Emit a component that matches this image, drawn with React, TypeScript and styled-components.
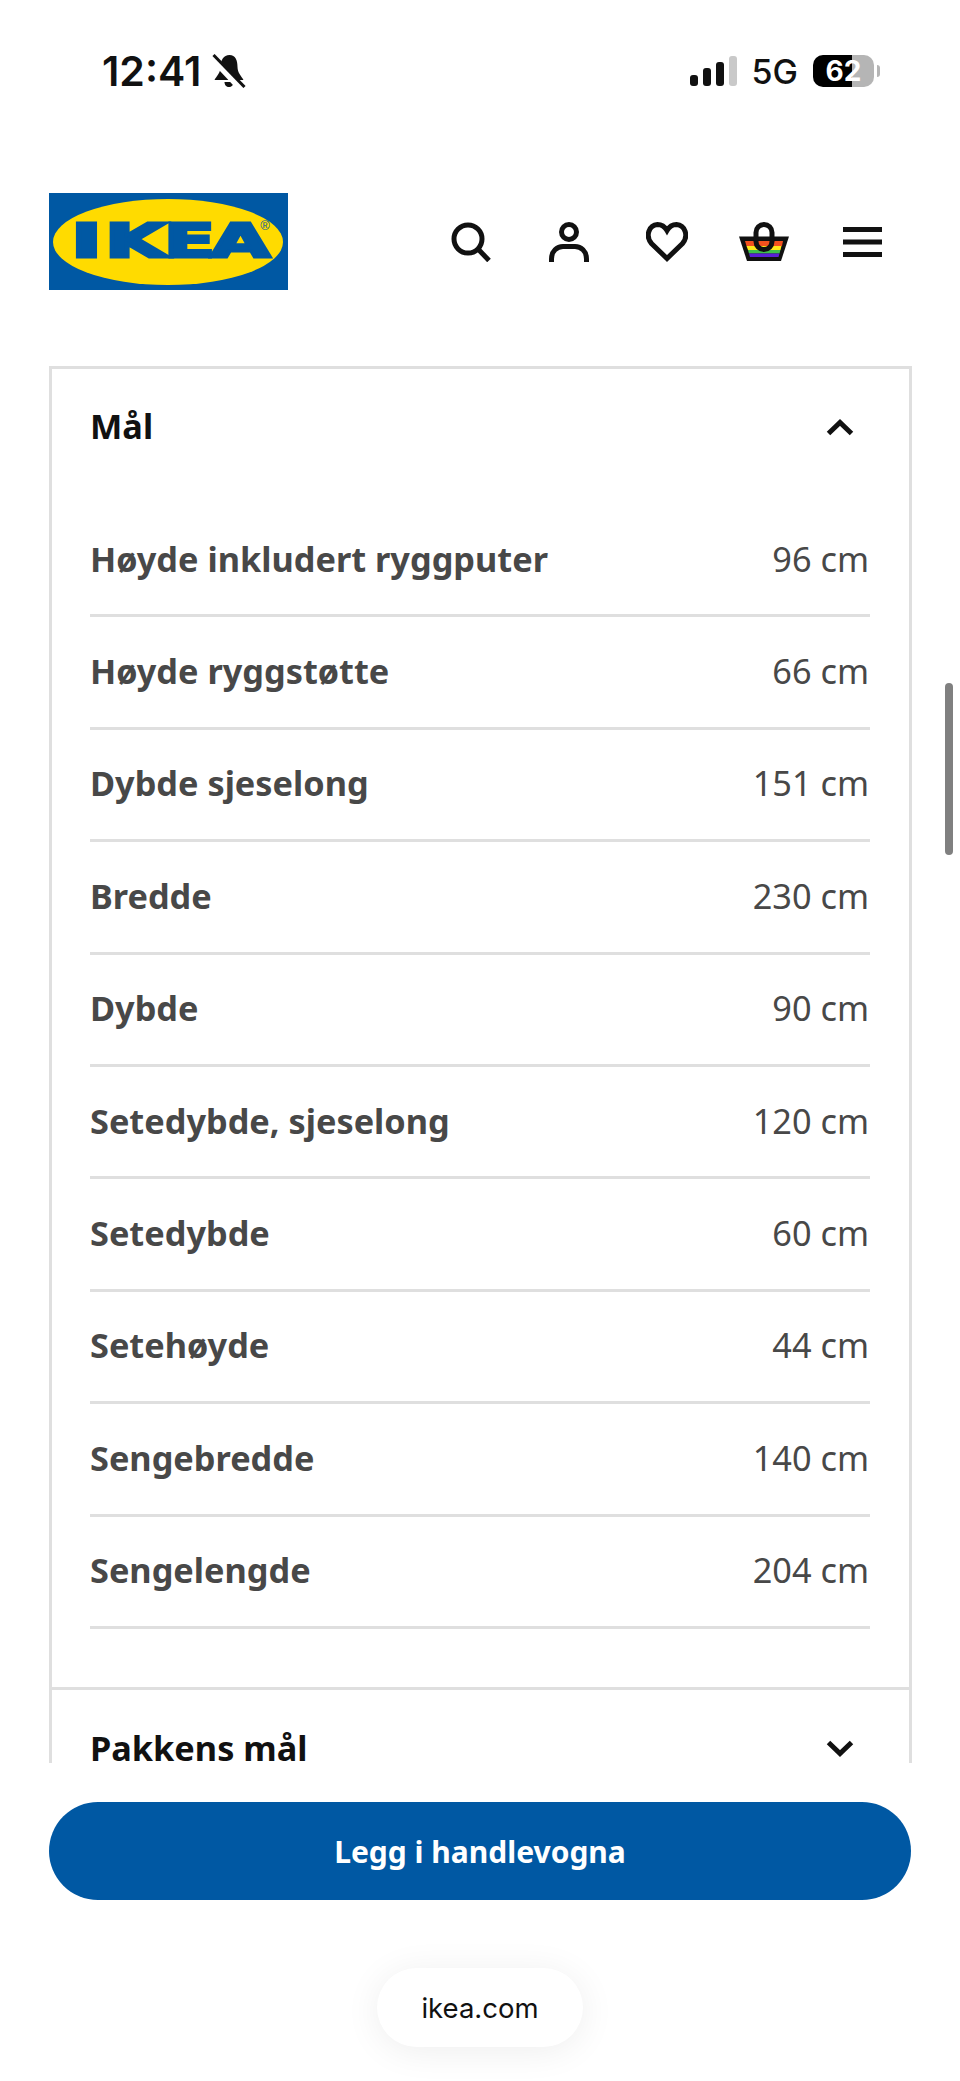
import React from "react";
import styled, { createGlobalStyle } from "styled-components";

const Global = createGlobalStyle`
  html, body { margin: 0; padding: 0; background: #fff; }
  * { box-sizing: border-box; }
`;

const Page = styled.div`
  position: relative;
  width: 960px;
  height: 2081px;
  overflow: hidden;
  background: #fff;
  font-family: "Noto Sans", sans-serif;
  display: flex;
  flex-direction: column;
`;

const StatusBar = styled.div`
  height: 193px;
  flex: none;
  padding: 50px 80px 0 102px;
  display: flex;
  align-items: flex-start;
  justify-content: space-between;
`;

const StatusLeft = styled.div`
  display: flex;
  align-items: center;
  gap: 11px;
  height: 42px;
`;

const Clock = styled.span`
  font-family: Inter, sans-serif;
  font-weight: 600;
  font-size: 41px;
  line-height: 42px;
  color: #111;
`;

const StatusRight = styled.div`
  display: flex;
  align-items: center;
  height: 42px;
`;

const Network = styled.span`
  font-family: Inter, sans-serif;
  font-weight: 500;
  font-size: 34px;
  color: #111;
  margin: 0 15px 0 15px;
`;

const Battery = styled.div`
  width: 61px;
  height: 32px;
  border-radius: 10px;
  overflow: hidden;
  background: linear-gradient(to right, #000 0 64%, #b5b5b5 64% 100%);
  color: #fff;
  font-family: Inter, sans-serif;
  font-weight: 700;
  font-size: 28px;
  line-height: 32px;
  text-align: center;
`;

const BatteryCap = styled.div`
  width: 3px;
  height: 12px;
  margin-left: 3px;
  border-radius: 0 3px 3px 0;
  background: #b5b5b5;
`;

const Header = styled.header`
  flex: none;
  height: 173px;
  padding: 0 72px 0 49px;
  display: flex;
  align-items: flex-start;
  justify-content: space-between;
`;

const IconRow = styled.nav`
  display: flex;
  align-items: center;
  width: 443px;
  height: 97px;
  justify-content: space-between;
`;

const IconSlot = styled.span`
  display: flex;
  width: 52px;
  height: 52px;
  align-items: center;
  justify-content: center;
`;

const Main = styled.main`
  flex: none;
  height: 1397px;
  padding: 0 48px 0 49px;
  overflow: hidden;
`;

const Card = styled.section`
  border: 3px solid #dfdfdf;
`;

const Group = styled.div<{ $divider?: boolean }>`
  border-top: ${(p) => (p.$divider ? "3px solid #dfdfdf" : "none")};
  padding: 0 39px 0 38px;
`;

const GroupHead = styled.div<{ $tall?: boolean }>`
  display: flex;
  align-items: center;
  justify-content: space-between;
  height: ${(p) => (p.$tall ? "114px" : "117px")};
`;

const GroupTitle = styled.h2`
  margin: 0;
  font-size: 34.3px;
  font-weight: 700;
  line-height: 48px;
  color: #111;
`;

const Chevron = styled.svg`
  display: block;
  margin: 2px 15px 0 0;
`;

const Rows = styled.dl`
  margin: 0;
  padding: 22px 0 58px;
`;

const Row = styled.div`
  display: flex;
  align-items: center;
  justify-content: space-between;
  height: 112.4px;
  padding-bottom: 3px;
  border-bottom: 3px solid #dfdfdf;
`;

const Term = styled.dt`
  font-size: 34.3px;
  font-weight: 700;
  color: #484848;
`;

const Value = styled.dd`
  margin: 0 1px 0 0;
  font-size: 34.3px;
  color: #484848;
`;

const BuyBar = styled.div`
  flex: none;
  padding: 39px 49px 0;
`;

const BuyButton = styled.button`
  width: 862px;
  height: 98px;
  border: 0;
  border-radius: 49px;
  background: #0058a3;
  color: #fff;
  font-family: "Noto Sans", sans-serif;
  font-size: 30px;
  font-weight: 700;
`;

const UrlPill = styled.div`
  position: absolute;
  left: 377px;
  top: 1968px;
  width: 206px;
  height: 79px;
  border-radius: 40px;
  background: #fff;
  box-shadow: 0 4px 36px rgba(0, 0, 0, 0.07);
  display: flex;
  align-items: center;
  justify-content: center;
  font-family: Inter, sans-serif;
  font-size: 27.5px;
  color: #111;
`;

const ScrollThumb = styled.div`
  position: absolute;
  left: 945px;
  top: 683px;
  width: 8px;
  height: 172px;
  border-radius: 4px;
  background: #808080;
`;

const rows: [string, string][] = [
  ["Høyde inkludert ryggputer", "96 cm"],
  ["Høyde ryggstøtte", "66 cm"],
  ["Dybde sjeselong", "151 cm"],
  ["Bredde", "230 cm"],
  ["Dybde", "90 cm"],
  ["Setedybde, sjeselong", "120 cm"],
  ["Setedybde", "60 cm"],
  ["Setehøyde", "44 cm"],
  ["Sengebredde", "140 cm"],
  ["Sengelengde", "204 cm"],
];

const ChevronIcon = ({ up }: { up?: boolean }) => (
  <Chevron width="30" height="20" viewBox="0 0 30 20">
    <path d={up ? "M3.5 16.5 L15 5.5 L26.5 16.5" : "M3.5 3.5 L15 14.5 L26.5 3.5"} fill="none" stroke="#111" strokeWidth="5" />
  </Chevron>
);

const logoLetters: [string, number, number][] = [
  ["I", 22, 31],
  ["K", 56, 61],
  ["E", 115, 51],
  ["A", 162, 59],
];

const Logo = () => (
  <svg width="239" height="97" viewBox="0 0 239 97">
    <rect width="239" height="97" fill="#0058a3" />
    <ellipse cx="119" cy="49" rx="115" ry="43" fill="#ffdb00" />
    {logoLetters.map(([letter, x, w]) => (
      <text
        key={letter}
        x={x}
        y="64"
        fontFamily="'DejaVu Sans', sans-serif"
        fontWeight="700"
        fontSize="46"
        textLength={w}
        lengthAdjust="spacingAndGlyphs"
        fill="#0058a3"
        stroke="#0058a3"
        strokeWidth="3"
      >
        {letter}
      </text>
    ))}
    <text x="216" y="37" fontFamily="'Liberation Sans', sans-serif" fontSize="13" textAnchor="middle" fill="#0058a3">®</text>
  </svg>
);

const Search = () => (
  <svg width="40" height="40" viewBox="0 0 40 40" fill="none" stroke="#111" strokeWidth="5">
    <circle cx="17" cy="17" r="14" />
    <path d="M27 27 L38 38.5" />
  </svg>
);

const Person = () => (
  <svg width="40" height="40" viewBox="0 0 40 40" fill="none" stroke="#111" strokeWidth="5">
    <circle cx="20" cy="10" r="7.5" />
    <path d="M2.5 40 V37 C2.5 29 8 24.5 14 24.5 H26 C32 24.5 37.5 29 37.5 37 V40" />
  </svg>
);

const Heart = () => (
  <svg width="42" height="40" viewBox="0 0 42 40" fill="none" stroke="#111" strokeWidth="5">
    <path d="M21 36.5 L5.5 21.5 C-1 14 3 3 11.5 2.5 C16 2.5 19 5 21 8.5 C23 5 26 2.5 30.5 2.5 C39 3 43 14 36.5 21.5 Z" />
  </svg>
);

const Basket = () => (
  <svg width="50" height="40" viewBox="0 0 50 40">
    <path d="M0 14.5 H50 L42 39 H8 Z" fill="#111" />
    <path d="M6 19 H44 L43 24 H7.5 Z" fill="#f4511e" />
    <path d="M7.5 24 H42.5 L41.5 28 H9 Z" fill="#ffe91a" />
    <path d="M9 28 H41.5 L40.5 31.5 H10 Z" fill="#3ec24a" />
    <path d="M10 31.5 H40.5 L39.5 35 H11 Z" fill="#5a1fd6" />
    <rect x="17" y="2.5" width="16" height="25" rx="8" fill="none" stroke="#111" strokeWidth="5" />
  </svg>
);

const Menu = () => (
  <svg width="39" height="30" viewBox="0 0 39 30" fill="#111">
    <rect width="39" height="5" y="0" />
    <rect width="39" height="5" y="12.5" />
    <rect width="39" height="5" y="25" />
  </svg>
);

const SilentBell = () => (
  <svg width="34" height="34" viewBox="0 0 33 34">
    <path d="M17 1 C11 1 8 6 8 13 C8 19 4 22 2 26 H31 C29 22 25 19 25 13 C25 6 23 1 17 1 Z M12 28 H21 C21 31 19 33 16.5 33 C14 33 12 31 12 28 Z" fill="#111" />
    <path d="M0 4 L30 36" stroke="#fff" strokeWidth="7" />
    <path d="M1 1 L32 33" stroke="#111" strokeWidth="3" />
  </svg>
);

const Signal = () => (
  <svg width="47" height="30" viewBox="0 0 47 30">
    <rect x="0" y="19" width="8" height="11" rx="3" fill="#111" />
    <rect x="13" y="12" width="8" height="18" rx="3" fill="#111" />
    <rect x="26" y="6" width="8" height="24" rx="3" fill="#111" />
    <rect x="39" y="0" width="8" height="30" rx="3" fill="#c9c9c9" />
  </svg>
);

export default function App() {
  return (
    <Page>
      <Global />
      <StatusBar>
        <StatusLeft>
          <Clock>12:41</Clock>
          <SilentBell />
        </StatusLeft>
        <StatusRight>
          <Signal />
          <Network>5G</Network>
          <Battery>62</Battery>
          <BatteryCap />
        </StatusRight>
      </StatusBar>
      <Header>
        <Logo />
        <IconRow>
          <IconSlot><Search /></IconSlot>
          <IconSlot><Person /></IconSlot>
          <IconSlot><Heart /></IconSlot>
          <IconSlot><Basket /></IconSlot>
          <IconSlot><Menu /></IconSlot>
        </IconRow>
      </Header>
      <Main>
        <Card>
          <Group>
            <GroupHead $tall>
              <GroupTitle>Mål</GroupTitle>
              <ChevronIcon up />
            </GroupHead>
            <Rows>
              {rows.map(([term, value]) => (
                <Row key={term}>
                  <Term>{term}</Term>
                  <Value>{value}</Value>
                </Row>
              ))}
            </Rows>
          </Group>
          <Group $divider>
            <GroupHead>
              <GroupTitle>Pakkens mål</GroupTitle>
              <ChevronIcon />
            </GroupHead>
          </Group>
        </Card>
      </Main>
      <BuyBar>
        <BuyButton>Legg i handlevogna</BuyButton>
      </BuyBar>
      <UrlPill>ikea.com</UrlPill>
      <ScrollThumb />
    </Page>
  );
}
